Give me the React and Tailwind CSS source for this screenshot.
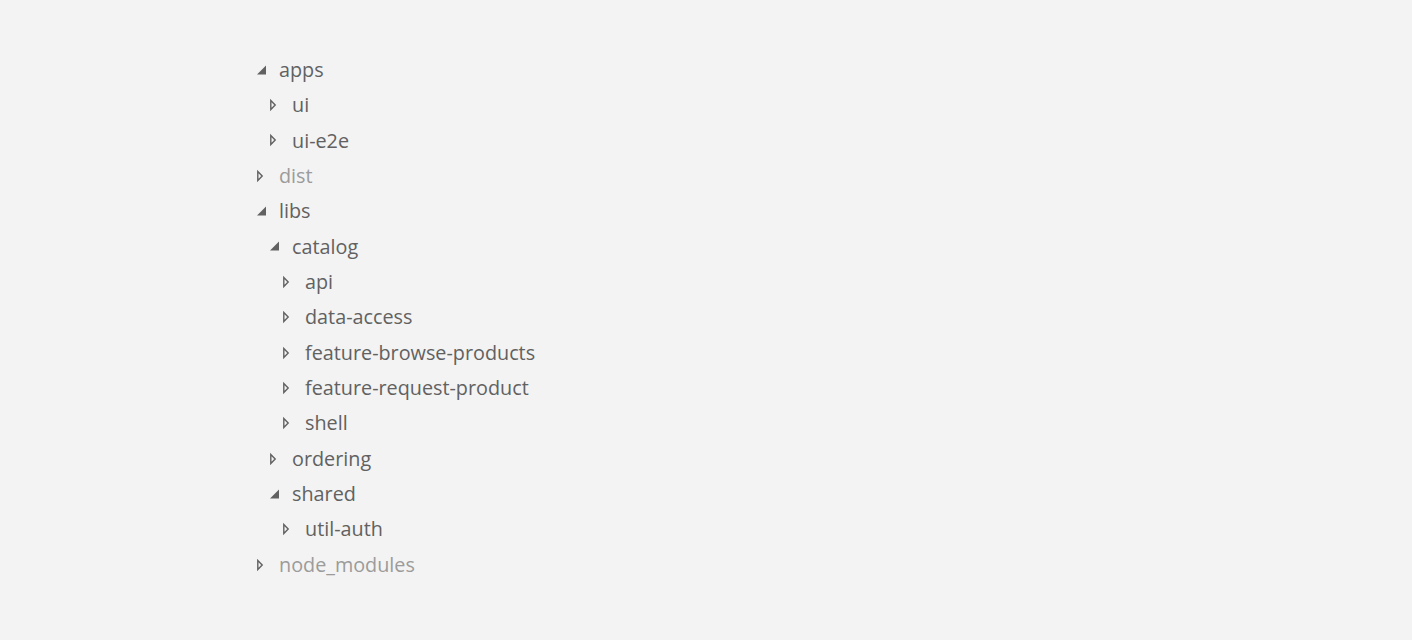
import React from 'react';

const rows = [
  { name: 'apps', depth: 0, open: true },
  { name: 'ui', depth: 1 },
  { name: 'ui-e2e', depth: 1 },
  { name: 'dist', depth: 0, dim: true },
  { name: 'libs', depth: 0, open: true },
  { name: 'catalog', depth: 1, open: true },
  { name: 'api', depth: 2 },
  { name: 'data-access', depth: 2 },
  { name: 'feature-browse-products', depth: 2 },
  { name: 'feature-request-product', depth: 2 },
  { name: 'shell', depth: 2 },
  { name: 'ordering', depth: 1 },
  { name: 'shared', depth: 1, open: true },
  { name: 'util-auth', depth: 2 },
  { name: 'node_modules', depth: 0, dim: true },
];

const Twisty = ({ open }) =>
  open ? (
    <svg width="12" height="12" viewBox="0 0 12 12" className="shrink-0">
      <path d="M11 1.5 L11 10.5 L2 10.5 Z" fill="#616161" />
    </svg>
  ) : (
    <svg width="12" height="14" viewBox="0 0 12 14" className="shrink-0">
      <path d="M2.8 2.5 L7.2 7 L2.8 11.5 Z" fill="none" stroke="#616161" strokeWidth="1.4" strokeLinejoin="miter" />
    </svg>
  );

const indents = ['pl-[255px]', 'pl-[268px]', 'pl-[281px]'];

export default function App() {
  return (
    <div className="min-h-screen w-full bg-[#f3f3f3] pt-[52px]" style={{ fontFamily: '"Open Sans", "Noto Sans", sans-serif' }}>
      {rows.map((r) => (
        <div key={r.name} className={`flex h-[35.36px] items-center ${indents[r.depth]}`}>
          <div className="flex w-[24px] items-center">
            <Twisty open={r.open} />
          </div>
          <span className={`text-[19.8px] leading-none ${r.dim ? 'text-[#9b9b9b]' : 'text-[#616161]'}`}>{r.name}</span>
        </div>
      ))}
    </div>
  );
}
